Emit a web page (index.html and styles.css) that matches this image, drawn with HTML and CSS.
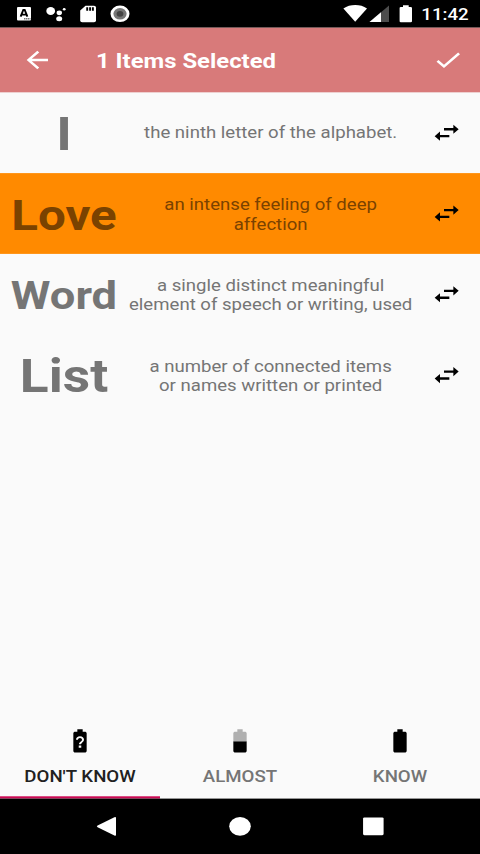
FILE: index.html
```html
<!DOCTYPE html>
<html lang="en">
<head>
<meta charset="utf-8">
<title>Word list</title>
<link rel="stylesheet" href="styles.css">
</head>
<body>
<div class="screen">
  <div class="status">
    <svg class="notifications" viewBox="0 0 140 27.7" preserveAspectRatio="none" fill="#fff">
      <rect x="17" y="7" width="14" height="13.5" rx="1"/>
      <path d="M20.6 16.700 23.300 10h1.400l2.700 6.700M22 14.600h4" fill="none" stroke="#000" stroke-width="1.900"/>
      <path d="M24 18.700h6.500" stroke="#777" stroke-width="1.500" stroke-dasharray="1.400 .500"/>
      <ellipse cx="50.700" cy="11" rx="4.400" ry="4"/><ellipse cx="59.300" cy="12.800" rx="2.700" ry="2.400"/><ellipse cx="64.200" cy="9.200" rx="1.400" ry="1.200"/><ellipse cx="59.200" cy="18.700" rx="3" ry="2.500"/>
      <path d="M85.500 5.800h8.500a2 1.700 0 0 1 2 1.700v13a2 1.700 0 0 1-2 1.700h-11.800a2 1.700 0 0 1-2-1.700V10.400z"/>
      <path d="M87.200 7.300v3.500M90.100 7.300v3.500M92.900 7.300v3.500" stroke="#000" stroke-width="1.900"/>
      <ellipse cx="120" cy="13.800" rx="9.500" ry="8.300"/><ellipse cx="120" cy="13.800" rx="6.600" ry="5.800" fill="#777"/><ellipse cx="120" cy="13.800" rx="3.400" ry="2.900" fill="#444"/>
    </svg>
    <svg class="signals" viewBox="340 0 78 27.7" preserveAspectRatio="none" fill="#fff">
      <path d="M343.400 8.500C350 4 360.500 4 367 8.500L355.200 21.700z"/>
      <path d="M389 5.500v16.500h-19.500z" fill="#4d4d4d"/><path d="M381 12.200v9.800h-11.500z"/>
      <path d="M403 5.300h5.700v1.600h2a1.300 1.100 0 0 1 1.300 1.100v13.200a1.300 1.100 0 0 1-1.300 1.100h-9.800a1.300 1.100 0 0 1-1.300-1.100V8a1.300 1.100 0 0 1 1.300-1.100h2.100z"/>
    </svg>
    <span class="clock">11:42</span>
  </div>
  <header class="toolbar">
    <svg class="icon" viewBox="0 0 24 24" fill="#fff"><path d="M20 11H7.830l5.590-5.590L12 4l-8 8 8 8 1.410-1.410L7.830 13H20v-2z"/></svg>
    <h1 class="title">1 Items Selected</h1>
    <svg class="icon" viewBox="0 0 24 24" fill="#fff"><path d="M9 16.170 4.830 12l-1.420 1.410L9 19 21 7l-1.410-1.410z"/></svg>
  </header>
  <main class="list">
    <div class="row">
      <div class="word large">I</div>
      <div class="definition">the ninth letter of the alphabet.</div>
      <svg class="icon" viewBox="0 0 24 24"><path d="M6.990 11 3 15l3.990 4v-3H14v-2H6.990v-3zM21 9l-3.990-4v3H10v2h7.010v3L21 9z"/></svg>
    </div>
    <div class="row selected">
      <div class="word medium">Love</div>
      <div class="definition">an intense feeling of deep<br>affection</div>
      <svg class="icon" viewBox="0 0 24 24"><path d="M6.990 11 3 15l3.990 4v-3H14v-2H6.990v-3zM21 9l-3.990-4v3H10v2h7.010v3L21 9z"/></svg>
    </div>
    <div class="row">
      <div class="word small">Word</div>
      <div class="definition">a single distinct meaningful<br>element of speech or writing, used</div>
      <svg class="icon" viewBox="0 0 24 24"><path d="M6.990 11 3 15l3.990 4v-3H14v-2H6.990v-3zM21 9l-3.990-4v3H10v2h7.010v3L21 9z"/></svg>
    </div>
    <div class="row">
      <div class="word large">List</div>
      <div class="definition">a number of connected items<br>or names written or printed</div>
      <svg class="icon" viewBox="0 0 24 24"><path d="M6.990 11 3 15l3.990 4v-3H14v-2H6.990v-3zM21 9l-3.990-4v3H10v2h7.010v3L21 9z"/></svg>
    </div>
  </main>
  <div class="tabs">
    <div class="tab active">
      <svg class="icon" viewBox="0 0 24 24"><path d="M15.670 4H14V2h-4v2H8.330C7.600 4 7 4.600 7 5.330v15.330C7 21.400 7.600 22 8.330 22h7.330c.740 0 1.340-.600 1.340-1.330V5.330C17 4.600 16.400 4 15.670 4zm-2.720 13.950h-1.900v-1.900h1.900v1.900zm1.350-5.260s-.380.420-.670.710c-.480.480-.830 1.150-.830 1.600h-1.600c0-.830.460-1.520.930-2l.930-.940c.270-.270.440-.650.440-1.060 0-.830-.670-1.500-1.500-1.500s-1.500.670-1.500 1.500H9c0-1.660 1.340-3 3-3s3 1.340 3 3c0 .660-.270 1.260-.700 1.690z"/></svg>
      <span>DON'T KNOW</span>
    </div>
    <div class="tab">
      <svg class="icon" viewBox="0 0 24 24"><path fill="#b0b0b0" d="M17 5.330C17 4.600 16.400 4 15.670 4H14V2h-4v2H8.330C7.600 4 7 4.600 7 5.330V13h10z"/><path d="M7 12.500v8.170C7 21.400 7.600 22 8.330 22h7.330c.740 0 1.340-.600 1.340-1.330V12.500z"/></svg>
      <span>ALMOST</span>
    </div>
    <div class="tab">
      <svg class="icon" viewBox="0 0 24 24"><path d="M15.670 4H14V2h-4v2H8.330C7.600 4 7 4.600 7 5.330v15.330C7 21.400 7.600 22 8.330 22h7.330c.740 0 1.340-.600 1.340-1.330V5.330C17 4.600 16.400 4 15.670 4z"/></svg>
      <span>KNOW</span>
    </div>
  </div>
  <nav class="navbar">
    <svg class="nav-icon" viewBox="0 0 20 20"><path d="M3.200 9.300 15.800 2.100q1.200-.600 1.200.600v14.700q0 1.200-1.200.600L3.200 10.800q-1.200-.750 0-1.500z"/></svg>
    <svg class="nav-icon" viewBox="0 0 20 20"><circle cx="10" cy="10" r="8.100"/></svg>
    <svg class="nav-icon" viewBox="0 0 20 20"><rect x="2.300" y="2.300" width="15.400" height="15.400" rx="1"/></svg>
  </nav>
</div>
</body>
</html>
```
FILE: styles.css
```css
html, body {
  margin: 0;
  width: 480px;
  height: 854px;
  overflow: hidden;
  background: #000;
}

/* 360x740 layout units stretched to the 480x854 window */
.screen {
  display: flex;
  flex-direction: column;
  width: 360px;
  height: 740px;
  transform: scale(1.33333, 1.15405);
  transform-origin: 0 0;
  background: #fafafa;
  color: #757575;
  font-family: Roboto, "Liberation Sans", sans-serif;
  font-size: 14px;
  line-height: 16.4px;
}

svg {
  display: block;
  flex: none;
}

.icon {
  width: 24px;
  height: 24px;
}

.status {
  display: flex;
  height: 24px;
  flex: none;
  background: #000;
  color: #fff;
}

.notifications {
  width: 105px;
  height: 24px;
}

.signals {
  width: 58.5px;
  height: 24px;
  margin-left: 150px;
}

.clock {
  margin-left: 2.5px;
  line-height: 25px;
  font-weight: 500;
}

.toolbar {
  display: flex;
  align-items: center;
  height: 56px;
  flex: none;
  box-sizing: border-box;
  padding: 0 12px 0 16px;
  background: #d87a7a;
  color: #fff;
}

.title {
  flex: 1;
  margin: 0 0 0 32px;
  padding-top: 2px;
  font-size: 17.9px;
  line-height: 24px;
  font-weight: 700;
}

.list {
  flex: 1;
}

.row {
  display: flex;
  align-items: center;
  height: 70px;
}

.selected {
  background: #ff8a00;
  color: #7a4200;
}

.word {
  width: 80px;
  margin-left: 8px;
  padding-top: 4px;
  text-align: center;
  font-weight: 700;
  line-height: 48px;
  white-space: nowrap;
}

.large { font-size: 40px; }
.medium { font-size: 37px; }
.small { font-size: 34px; padding-top: 2px; }

.definition {
  width: 214px;
  margin: 0 13px 0 8px;
  padding-top: 1px;
  text-align: center;
  font-size: 13.95px;
  line-height: 17px;
  white-space: nowrap;
}

.tabs {
  display: flex;
  height: 72px;
  flex: none;
}

.tab {
  display: flex;
  flex-direction: column;
  align-items: center;
  gap: 11px;
  flex: 1;
  box-sizing: border-box;
  padding-top: 10px;
  font-weight: 500;
}

.active {
  border-bottom: 2px solid #cc0a55;
  color: #212121;
}

.navbar {
  display: flex;
  align-items: center;
  justify-content: center;
  gap: 80px;
  height: 48px;
  flex: none;
  background: #000;
}

.nav-icon {
  width: 20px;
  height: 20px;
  fill: #fff;
}
```
